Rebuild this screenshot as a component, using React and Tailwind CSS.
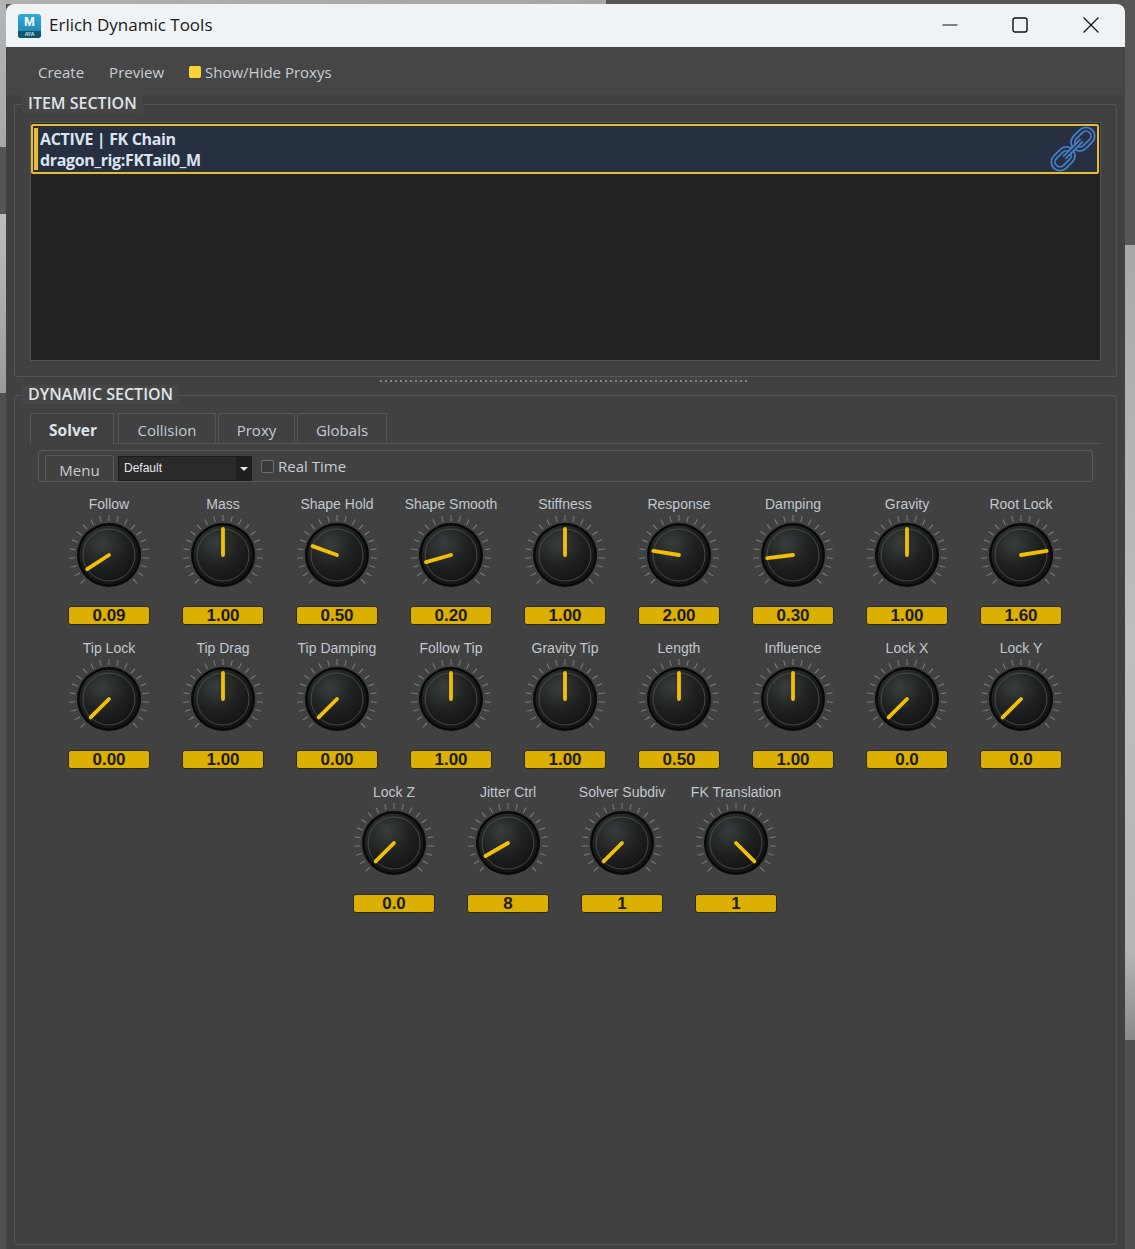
import React from 'react';

const row1 = [
  ['Follow', '0.09', -123], ['Mass', '1.00', 0], ['Shape Hold', '0.50', -70],
  ['Shape Smooth', '0.20', -106], ['Stiffness', '1.00', 0], ['Response', '2.00', -81],
  ['Damping', '0.30', -97], ['Gravity', '1.00', 0], ['Root Lock', '1.60', 81],
];
const row2 = [
  ['Tip Lock', '0.00', -135], ['Tip Drag', '1.00', 0], ['Tip Damping', '0.00', -135],
  ['Follow Tip', '1.00', 0], ['Gravity Tip', '1.00', 0], ['Length', '0.50', 0],
  ['Influence', '1.00', 0], ['Lock X', '0.0', -135], ['Lock Y', '0.0', -135],
];
const row3 = [
  ['Lock Z', '0.0', -135], ['Jitter Ctrl', '8', -120], ['Solver Subdiv', '1', -135], ['FK Translation', '1', 135],
];
const ticks = Array.from({ length: 21 }, (_, i) => -135 + i * 13.5);
const dots = Array.from({ length: 74 }, (_, i) => i);

const Knob = ({ label, value, angle, id }) => (
  <div className="w-[114px] h-[144px] flex flex-col items-center">
    <div className="h-[20px] leading-[20px] text-[14px] text-[#c0c8d0] whitespace-nowrap font-['Liberation_Sans',sans-serif]">{label}</div>
    <svg width="84" height="84" viewBox="-42 -42 84 84" className="mt-[-1px]">
      <defs>
        <radialGradient id={`knob${id}`} cx="0.38" cy="0.3" r="0.8">
          <stop offset="0" stopColor="#393d3d" />
          <stop offset="0.5" stopColor="#1e2120" />
          <stop offset="1" stopColor="#0f1110" />
        </radialGradient>
      </defs>
      {ticks.map((t) => (
        <line key={t} x1="0" y1="-34" x2="0" y2="-40" stroke="#7f7f7f" strokeWidth="1" transform={`rotate(${t})`} />
      ))}
      <circle r="32" fill="#090909" />
      <circle r="29.5" fill={`url(#knob${id})`} />
      <circle r="26" fill="none" stroke="#4f5453" strokeWidth="0.8" />
      <line x1="0" y1="0" x2="0" y2="-26" stroke="#f2bf07" strokeWidth="3.8" strokeLinecap="round" transform={`rotate(${angle})`} />
    </svg>
    <div className="mt-[9px] w-[82px] h-[19px] rounded-[3px] border border-[#2c2a1c] bg-[#dcb000] text-[#1b1b12] text-[17px] leading-[17px] font-bold text-center font-['Liberation_Sans',sans-serif]">{value}</div>
  </div>
);

const Tab = ({ children, active, width }) => (
  <div className={`${width} h-[31px] border border-b-0 border-[#555] leading-[33px] text-center ${active ? "pl-[2px] text-[15.5px] font-bold text-[#dde3e8] bg-[#404040]" : "text-[15px] text-[#c3ccd4]"}`}>
    {children}
  </div>
);

const MayaIcon = () => (
  <div className="w-[23px] h-[24px] rounded-[3px] bg-gradient-to-b from-[#35a9d6] to-[#1b7ea6] flex flex-col items-center overflow-hidden font-['Liberation_Sans',sans-serif]">
    <div className="h-[17px] leading-[16px] text-[13px] font-bold text-white">M</div>
    <div className="w-full h-[7px] bg-[#14536f] text-[5px] leading-[7px] text-center text-[#cfe6f0] font-bold">AYA</div>
  </div>
);

const LinkIcon = () => (
  <svg width="46" height="46" viewBox="2 2 42 42" fill="none" stroke="#4580cc" strokeWidth="1.6">
    <g transform="rotate(45 32 14)">
      <rect x="24" y="2" width="16" height="24" rx="8" />
      <rect x="27.5" y="5.5" width="9" height="17" rx="4.5" />
    </g>
    <g transform="rotate(45 14 32)">
      <rect x="6" y="20" width="16" height="24" rx="8" />
      <rect x="9.5" y="23.5" width="9" height="17" rx="4.5" />
    </g>
    <line x1="15" y1="31" x2="31" y2="15" strokeWidth="4.5" />
    <line x1="15" y1="31" x2="31" y2="15" stroke="#263040" strokeWidth="1.5" />
  </svg>
);

const App = () => (
  <div className="w-[1135px] h-[1249px] overflow-hidden flex bg-[#505050] font-['Open_Sans','Noto_Sans',sans-serif]">
    {/* desktop showing around the window */}
    <div className="w-[6px] shrink-0 bg-[linear-gradient(to_bottom,#b5b5b5_0px,#a8a8a8_147px,#555_147px,#555_214px,#bdbdbd_214px,#9a9a9a_393px,#505050_393px)]" />
    <div className="w-[1119px] shrink-0 flex flex-col">
      <div className="h-[4px] shrink-0 bg-[linear-gradient(to_right,#b0b0b0_0px,#a4a4a4_600px,#555_600px)]" />
      <div className="h-[1245px] flex flex-col bg-[#414141] rounded-t-[8px] overflow-hidden">
        {/* title bar */}
        <div className="h-[43px] shrink-0 bg-[#eff3f6] flex items-center pl-[12px] text-[#1a1a1a]">
          <MayaIcon />
          <span className="ml-[8px] text-[17px] leading-[20px] mt-[-2px]">Erlich Dynamic Tools</span>
          <div className="ml-auto flex items-center mt-[-2px]">
            <svg width="16" height="16" viewBox="0 0 16 16" stroke="#111" strokeWidth="1.2" fill="none" className="mr-[54px]"><line x1="0.5" y1="8" x2="15.5" y2="8" /></svg>
            <svg width="16" height="16" viewBox="0 0 16 16" stroke="#111" strokeWidth="1.4" fill="none" className="mr-[55px]"><rect x="1" y="1" width="14" height="14" rx="2" /></svg>
            <svg width="16" height="16" viewBox="0 0 16 16" stroke="#111" strokeWidth="1.2" fill="none" className="mr-[26px]"><path d="M0.5 0.5 L15.5 15.5 M15.5 0.5 L0.5 15.5" /></svg>
          </div>
        </div>

        {/* menu bar */}
        <div className="h-[48px] shrink-0 bg-[#464646] flex items-center pl-[32px] pt-[2px] text-[15px] text-[#c6ced5]">
          <span>Create</span>
          <span className="ml-[25px]">Preview</span>
          <span className="ml-[25px] w-[12px] h-[12px] rounded-[2px] bg-[#fdd33c]" />
          <span className="ml-[4px]">Show/Hide Proxys</span>
        </div>

        <div className="flex-1 flex flex-col px-[8px] pt-[9px]">
          {/* item section */}
          <div className="relative h-[273px] shrink-0 border border-[#555] rounded-[3px] px-[15px] pt-[17px] pb-[15px]">
            <div className="absolute left-[7px] top-[-11px] h-[19px] px-[6px] bg-[#464646] text-[16px] leading-[19px] font-semibold text-[#dfe4e8]">ITEM SECTION</div>
            <div className="h-full bg-[#222222] border border-[#555] p-[1px] pl-[1px]">
              <div className="h-[50px] bg-[#263040] border-2 border-[#e8bb33] rounded-[2px] flex items-center pl-[1px] pr-[1px] ml-[-1px]">
                <div className="w-[4px] h-[42px] bg-[#e8bb33]" />
                <div className="ml-[2px] mt-[2px] text-[16px] leading-[21px] font-bold text-[#dbe4ee] tracking-[-0.35px]">
                  <div>ACTIVE | FK Chain</div>
                  <div>dragon_rig:FKTail0_M</div>
                </div>
                <div className="ml-auto"><LinkIcon /></div>
              </div>
            </div>
          </div>

          {/* splitter */}
          <div className="h-[18px] shrink-0 flex justify-center gap-[3px] pt-[3px] pr-[4px]">
            {dots.map((d) => <div key={d} className="w-[2px] h-[2px] bg-[#858585]" />)}
          </div>

          {/* dynamic section */}
          <div className="relative flex-1 border border-[#555] rounded-[3px] px-[15px] pt-[17px]">
            <div className="absolute left-[7px] top-[-11px] h-[19px] px-[6px] bg-[#464646] text-[16px] leading-[19px] font-semibold text-[#dfe4e8]">DYNAMIC SECTION</div>
            <div className="flex gap-[2px] border-b border-[#555] h-[31px]">
              <Tab active width="w-[84px]">Solver</Tab>
              <Tab width="w-[98px] ml-[2px]">Collision</Tab>
              <Tab width="w-[77px]">Proxy</Tab>
              <Tab width="w-[90px]">Globals</Tab>
            </div>
            <div className="mt-[6px] ml-[8px] mr-[8px] h-[32px] border border-[#5a5a5a] rounded-[3px] flex pl-[6px]">
              <div className="w-[69px] mt-[4px] h-[27px] border border-b-0 border-[#5a5a5a] rounded-t-[3px] text-center text-[15px] leading-[29px] text-[#c6ced5]">Menu</div>
              <div className="ml-[4px] mt-[5px] w-[134px] h-[25px] bg-[#2a2a2a] border border-[#1c1c1c] flex items-center justify-between text-[12px] text-[#e4e8ec] pl-[5px] pb-[2px] font-['Liberation_Sans',sans-serif]">
                <span>Default</span>
                <div className="w-[15px] h-[23px] mb-[-2px] flex items-center justify-center bg-[#1f1f1f]">
                  <div className="w-0 h-0 border-x-[4px] border-x-transparent border-t-[4px] border-t-[#e8e8e8]" />
                </div>
              </div>
              <div className="ml-[9px] mt-[9px] w-[13px] h-[13px] border border-[#6e6e6e] rounded-[2px] bg-[#3a3a3a]" />
              <div className="ml-[4px] mt-[3px] text-[15px] leading-[24px] text-[#c6ced5]">Real Time</div>
            </div>

            {/* knobs */}
            <div className="mt-[12px] ml-[22px] w-[1026px] flex flex-col">
              <div className="grid grid-cols-9">
                {row1.map(([l, v, a], i) => <Knob key={l} id={`a${i}`} label={l} value={v} angle={a} />)}
              </div>
              <div className="grid grid-cols-9">
                {row2.map(([l, v, a], i) => <Knob key={l} id={`b${i}`} label={l} value={v} angle={a} />)}
              </div>
              <div className="flex justify-center">
                {row3.map(([l, v, a], i) => <Knob key={l} id={`c${i}`} label={l} value={v} angle={a} />)}
              </div>
            </div>
          </div>
        </div>
        <div className="h-[4px] shrink-0" />
      </div>
    </div>
    <div className="w-[10px] shrink-0 bg-[linear-gradient(to_bottom,#565656_0px,#565656_245px,#a8a8a8_245px,#bdbdbd_640px,#b5b5b5_950px,#8a8a8a_1040px,#505050_1040px)]" />
  </div>
);

export default App;
